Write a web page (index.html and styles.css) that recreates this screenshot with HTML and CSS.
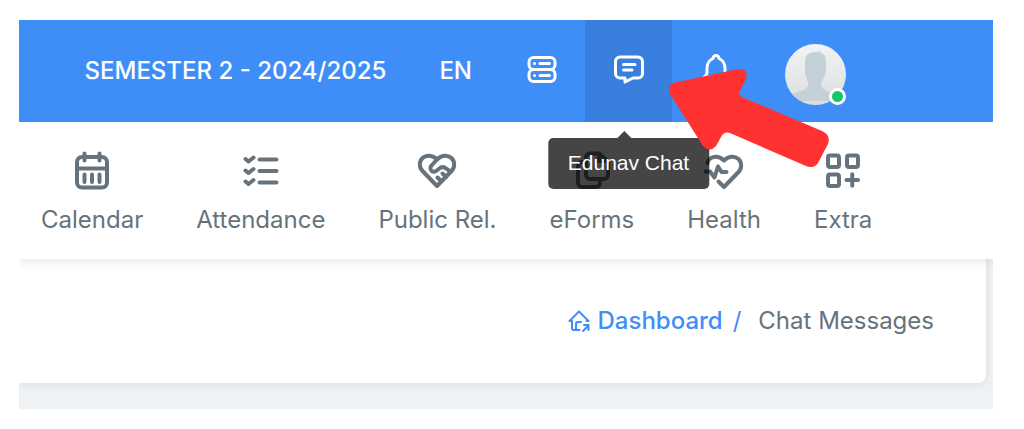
FILE: index.html
```
<!DOCTYPE html>
<html lang="en">
<head>
  <meta charset="UTF-8" />
  <meta name="viewport" content="width=device-width, initial-scale=1" />
  <title>Chat Messages</title>
  <link rel="stylesheet" href="styles.css">
</head>
<body>
  <div class="app">
    <header class="topbar">
      <a class="topbar-link" href="#">SEMESTER 2 - 2024/2025</a>
      <a class="topbar-link" href="#">EN</a>

      <div class="tools">
        <button class="tool" type="button" aria-label="Servers">
          <svg class="tool-icon" viewBox="0 0 40 40">
            <rect x="7" y="6.500" width="26" height="12" rx="4.500"/>
            <rect x="7" y="18.500" width="26" height="12" rx="4.500"/>
            <path d="M12.500 12.500h.1M18 12.500h9.500M12.500 24.500h.1M18 24.500h9.500"/>
          </svg>
        </button>

        <div class="tool-wrap">
          <button class="tool active" type="button" aria-label="Edunav Chat" aria-describedby="chatTip">
            <svg class="tool-icon" viewBox="0 0 40 40">
              <path d="M11 6h18a4.500 4.500 0 0 1 4.500 4.500v12a4.500 4.500 0 0 1-4.500 4.500h-5l-8 4v-4h-5a4.500 4.500 0 0 1-4.500-4.500v-12a4.500 4.500 0 0 1 4.500-4.500z"/>
              <path d="M14.500 13.500h11.500M14.500 19h8.500"/>
            </svg>
          </button>
          <div class="tooltip" id="chatTip" role="tooltip">Edunav Chat</div>
        </div>

        <div class="tool-wrap">
          <button class="tool" type="button" aria-label="Notifications">
            <svg class="tool-icon" viewBox="0 0 40 40">
              <path d="M17 7.500a3 3 0 0 1 6 0a10.500 10.500 0 0 1 6 9v5a6 6 0 0 0 3 4.500H8a6 6 0 0 0 3-4.500v-5a10.500 10.500 0 0 1 6-9"/>
              <path d="M15.500 26.500v1.500a4.500 4.500 0 0 0 9 0v-1.500"/>
            </svg>
          </button>
          <svg class="pointer" viewBox="0 0 170 108" aria-hidden="true">
            <path d="M9 19L74 5Q85 4 82 15L76 27Q74 32 80 34L158 67Q167 71 164 80L154 99Q150 105 142 102L66 69Q60 67 57 73L52 82Q46 89 39 82L6 30Q3 22 9 19z"/>
          </svg>
        </div>
      </div>

      <a class="avatar" href="#" aria-label="Profile">
        <svg class="avatar-pic" viewBox="0 0 61 61">
          <defs>
            <linearGradient id="avatarBg" x1="0" y1="0" x2="0" y2="1">
              <stop offset="0" stop-color="#f2f3f4"/>
              <stop offset="1" stop-color="#dcdddd"/>
            </linearGradient>
            <clipPath id="avatarClip"><circle cx="30.500" cy="30.500" r="30.500"/></clipPath>
          </defs>
          <g clip-path="url(#avatarClip)">
            <rect width="61" height="61" fill="url(#avatarBg)"/>
            <path fill="#c5d1d9" d="M20 18C20 10 25 8 32 8l3-1 1 2c4 1 5 4 5 9v9l-1 3c-1 4-3 6-4 9 0 5 3 7 8 9 5 1 8 3 12 5v4H4v-5c3-3 8-4 13-5 5-2 7-5 6-9-1-3-2-5-3-9z"/>
          </g>
        </svg>
        <span class="status"></span>
      </a>
    </header>

    <nav class="menu">
      <a class="menu-item" href="#">
        <svg class="menu-icon" viewBox="0 0 40 40">
          <rect x="5" y="6" width="30" height="30.500" rx="5"/>
          <path d="M12.500 2.500v7M27.500 2.500v7M5 17.500h30M12.500 23.500v7.500M20 23.500v7.500M27.500 23.500v7.500"/>
        </svg>
        Calendar
      </a>
      <a class="menu-item" href="#">
        <svg class="menu-icon" viewBox="0 0 40 40">
          <path d="M4.500 8l3 2.500 5-4M4.500 19.500l3 2.500 5-4M4.500 30.500l3 2.500 5-4M18.500 8.500h17M18.500 20h17M18.500 31.500h17"/>
        </svg>
        Attendance
      </a>
      <a class="menu-item" href="#">
        <svg class="menu-icon" viewBox="0 0 40 40">
          <path d="M34.500 20L20 35 5.500 20a9.300 9.300 0 0 1 0-13C9.500 3.500 15.500 4 20 8.500C24.500 4 30.500 3.500 34.500 7a9.300 9.300 0 0 1 0 13"/>
          <path d="M20 8.500l-5.500 6a3.700 3.700 0 0 0 0 5.200c1.500 1.400 3.700 1.400 5 0l2.500-2c2.500-2 5-2 7.300 0l4.200 3M20.500 26.500l3.500 3.500M25.500 22.500l3.500 3.500"/>
        </svg>
        Public Rel.
      </a>
      <a class="menu-item" href="#">
        <svg class="menu-icon" viewBox="0 0 40 40">
          <path d="M27 2.500H18a4 4 0 0 0-4 4V24a4 4 0 0 0 4 4h14a4 4 0 0 0 4-4V10.500z"/>
          <path d="M27 3v7h8M28 28v4a4 4 0 0 1-4 4H10a4 4 0 0 1-4-4V15a4 4 0 0 1 4-4h4"/>
        </svg>
        eForms
      </a>
      <a class="menu-item" href="#">
        <svg class="menu-icon" viewBox="0 0 40 40">
          <path d="M14.500 30.500l5.500 5.500 14.500-15a9.300 9.300 0 0 0 0-13C30.500 4.500 24.500 5 20 9.500C15.500 5 9.500 4.500 5.500 8a9.300 9.300 0 0 0-2 4"/>
          <path d="M1.500 20.500H6l4.500 6 3.500-11 3.500 5.500h5"/>
        </svg>
        Health
      </a>
      <a class="menu-item" href="#">
        <svg class="menu-icon" viewBox="0 0 40 40">
          <rect x="5" y="4.500" width="11" height="11.500" rx="2"/>
          <rect x="24" y="4.500" width="11" height="11.500" rx="2"/>
          <rect x="5" y="23.500" width="11" height="11.500" rx="2"/>
          <path d="M23.500 29h11.500M29.250 23.250v11.500"/>
        </svg>
        Extra
      </a>
    </nav>

    <main class="content">
      <div class="card">
        <nav class="breadcrumb" aria-label="Breadcrumb">
          <a class="crumb" href="#">
            <svg class="crumb-icon" viewBox="0 0 24 24">
              <path d="M5 12H2.500L12 2.500l9.500 9.500h-2M5 12v7a2 2 0 0 0 2 2h5.500M9 21v-6a2 2 0 0 1 2-2h3M16 22l5.500-5.500M17 16h4.500v5"/>
            </svg>
            Dashboard
          </a>
          <span class="slash">/</span>
          <span class="current">Chat Messages</span>
        </nav>
      </div>
    </main>
  </div>
</body>
</html>
```
FILE: styles.css
```
* {
  box-sizing: border-box;
}
body {
  margin: 0;
  padding: 20px 31px 20px 19px;
  background: #fff;
  font-family: Inter, sans-serif;
  font-size: 24px;
  line-height: 30px;
  color: #66737c;
}
a {
  color: inherit;
  text-decoration: none;
}
.app {
  overflow: hidden;
  background: #eff2f4;
}

/* top bar */
.topbar {
  position: relative;
  z-index: 2;
  display: flex;
  align-items: center;
  justify-content: flex-end;
  height: 102px;
  padding-right: 147px;
  background: #3f8ef7;
  color: #fff;
}
.topbar-link {
  margin-right: 53px;
  font-weight: 500;
  white-space: nowrap;
}
.topbar-link + .topbar-link {
  margin-right: 26px;
}
.tools {
  display: flex;
  align-self: stretch;
  margin-right: 26px;
}
.tool-wrap {
  position: relative;
}
.tool {
  display: flex;
  align-items: center;
  justify-content: center;
  width: 87px;
  height: 100%;
  padding: 0;
  border: none;
  background: none;
  color: inherit;
  cursor: pointer;
}
.tool.active {
  background: #387fde;
}
svg {
  fill: none;
  stroke: currentColor;
  stroke-width: 3;
  stroke-linecap: round;
  stroke-linejoin: round;
}
.tool-icon {
  width: 40px;
  height: 40px;
}
.tooltip {
  position: absolute;
  top: 118px;
  left: 50%;
  padding: 10px 20px 11px;
  border-radius: 5px;
  background: rgba(0, 0, 0, 0.73);
  font-family: "Liberation Sans", Arial, sans-serif;
  font-size: 21px;
  color: #fff;
  white-space: nowrap;
  transform: translateX(-50%);
}
.tooltip::before {
  content: "";
  position: absolute;
  bottom: 100%;
  left: 69px;
  border: 7px solid transparent;
  border-top: none;
  border-bottom-color: rgba(0, 0, 0, 0.73);
}
.pointer {
  position: absolute;
  z-index: 3;
  top: 44px;
  left: -8px;
  width: 170px;
  height: 108px;
  fill: #ff3131;
  stroke: none;
  pointer-events: none;
}
.avatar {
  position: relative;
  width: 61px;
  height: 61px;
  margin-top: 6px;
}
.avatar-pic {
  display: block;
  width: 100%;
  stroke: none;
}
.status {
  position: absolute;
  right: 0;
  bottom: 0;
  width: 17px;
  height: 17px;
  border: 3px solid #fff;
  border-radius: 50%;
  background: #17c666;
}

/* main menu */
.menu {
  position: relative;
  z-index: 1;
  display: flex;
  gap: 53px;
  padding: 29px 22px 24px;
  background: #fff;
  box-shadow: 0 2px 10px rgba(40, 30, 40, 0.12);
}
.menu-item {
  display: flex;
  flex-direction: column;
  align-items: center;
  gap: 14px;
  white-space: nowrap;
}
.menu-icon {
  width: 40px;
  height: 40px;
  stroke-width: 4;
}

/* page header */
.content {
  padding: 0 7px 26px 0;
}
.card {
  display: flex;
  justify-content: flex-end;
  padding: 47px 52px;
  border-radius: 0 0 8px 0;
  background: #fff;
  box-shadow: 0 1px 8px rgba(40, 40, 50, 0.1);
}
.breadcrumb {
  display: flex;
  align-items: center;
}
.crumb {
  display: flex;
  align-items: center;
  gap: 7px;
  font-weight: 500;
  color: #3f8ef7;
}
.crumb-icon {
  width: 24px;
  height: 24px;
  stroke-width: 2;
}
.slash {
  margin: 0 17px 0 10px;
  color: #3f8ef7;
}
```
